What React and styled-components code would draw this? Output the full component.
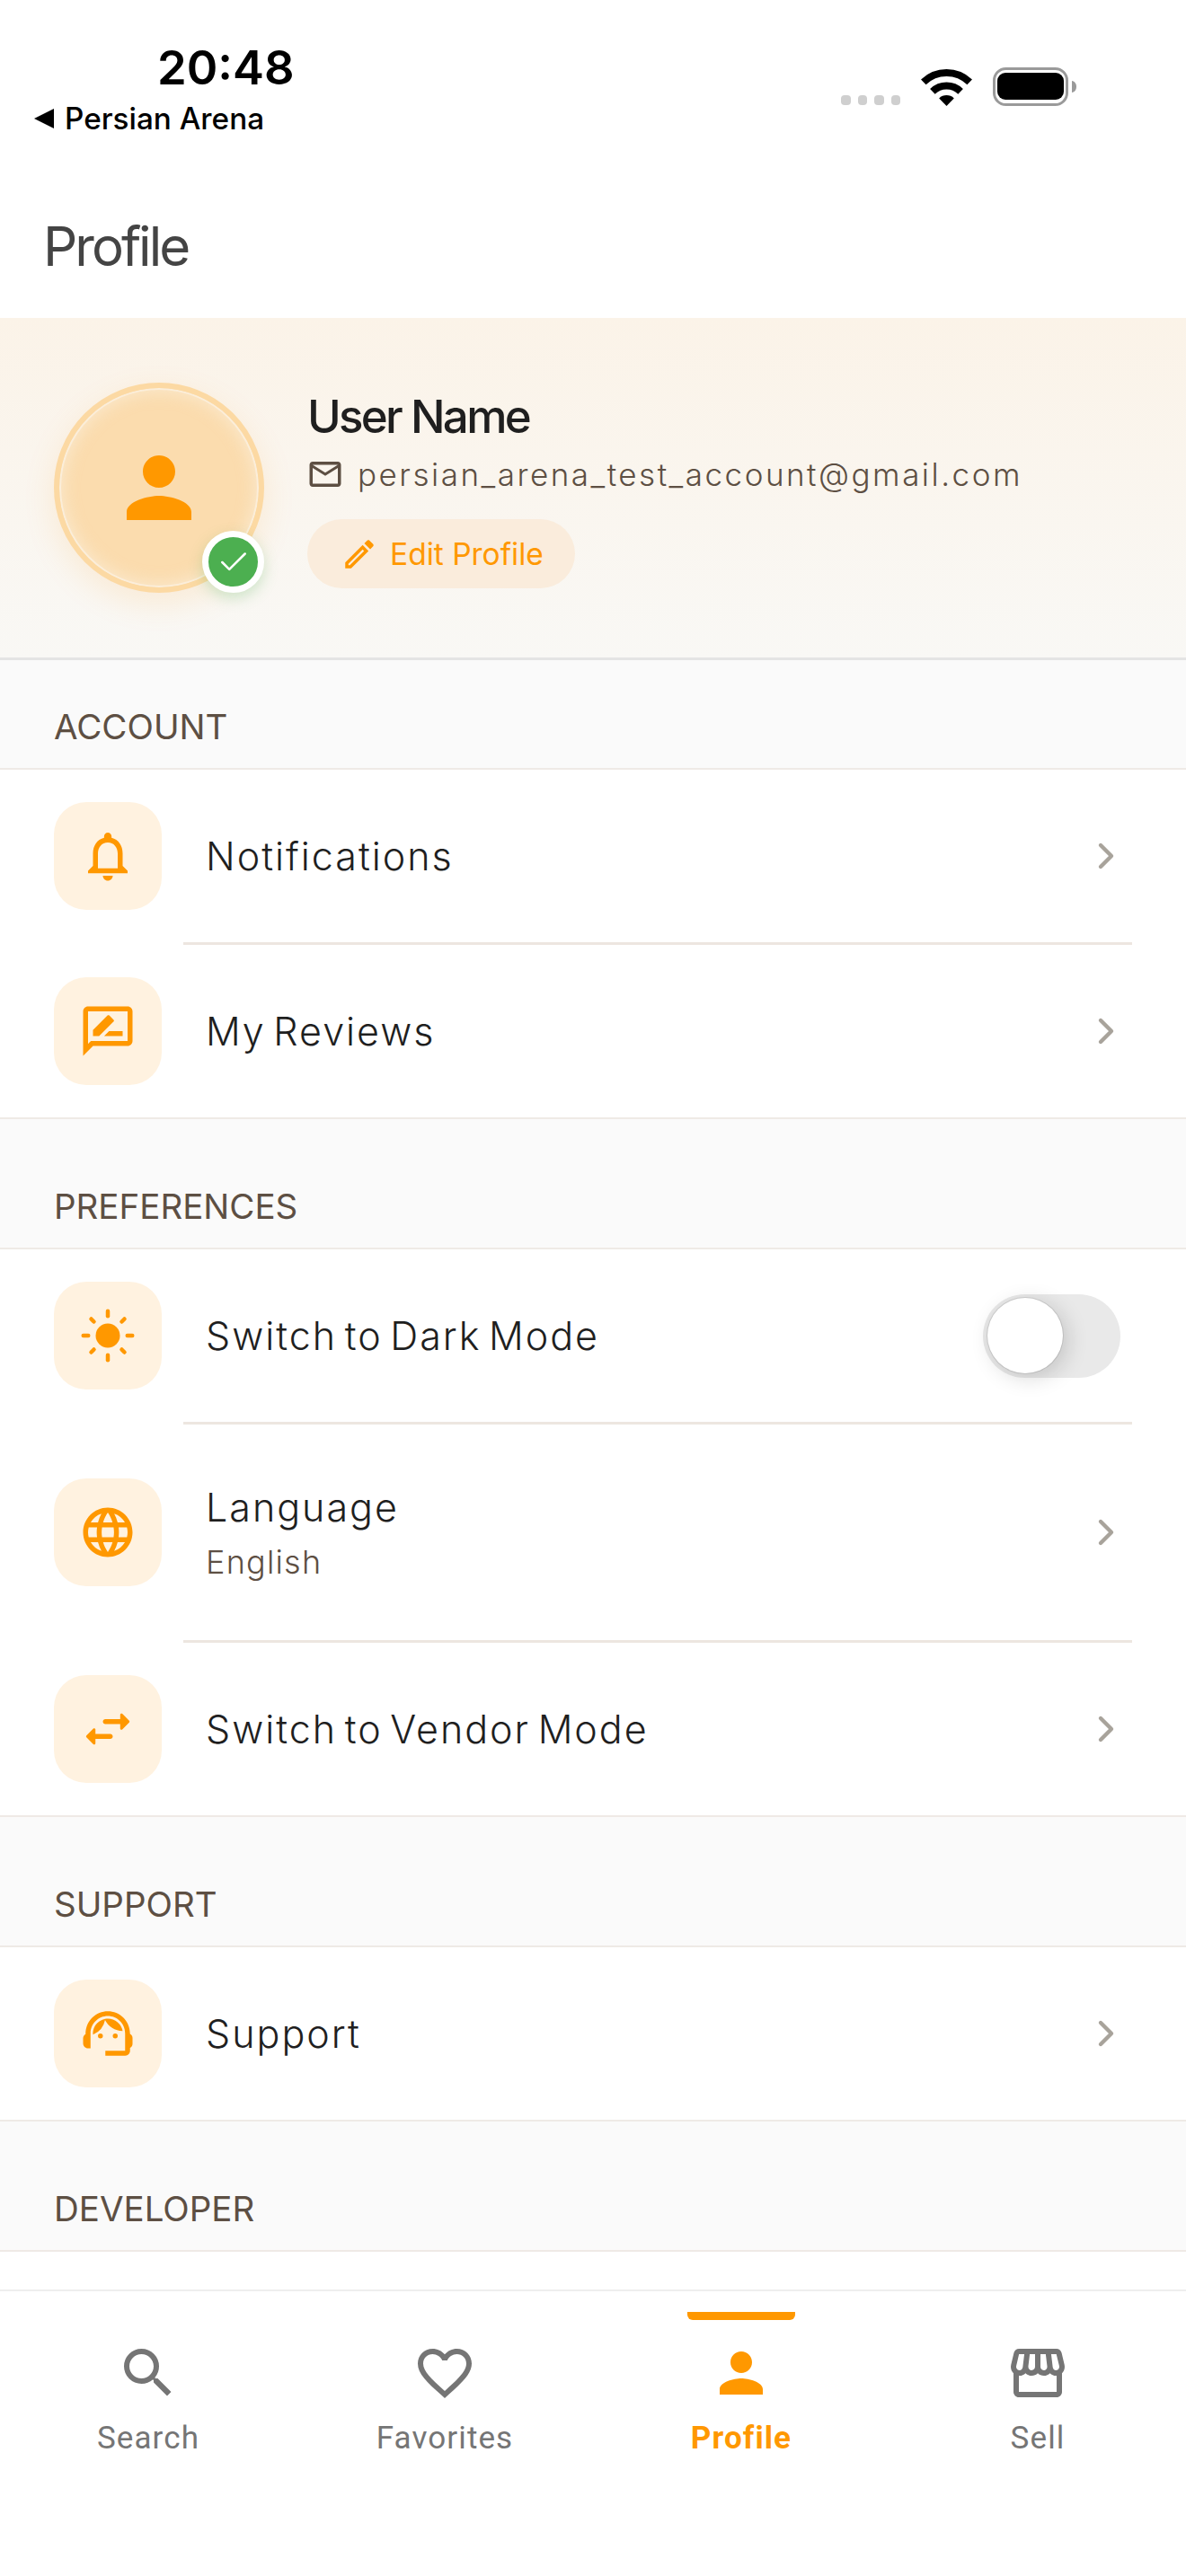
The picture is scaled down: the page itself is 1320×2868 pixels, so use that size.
import React from 'react'
import styled, { createGlobalStyle } from 'styled-components'
import { ChevronRight, Check } from 'lucide-react'
import {
  MdSearch,
  MdFavoriteBorder,
  MdPerson,
  MdOutlineStorefront,
  MdNotificationsNone,
  MdOutlineRateReview,
  MdLanguage,
  MdSupportAgent,
  MdMailOutline,
  MdOutlineEdit,
} from 'react-icons/md'

const ORANGE = '#ff9800'

const GlobalStyle = createGlobalStyle`
  html, body {
    margin: 0;
    padding: 0;
    background: #fff;
  }
  * {
    box-sizing: border-box;
  }
`

const Page = styled.div`
  width: 1320px;
  height: 2868px;
  display: flex;
  flex-direction: column;
  overflow: hidden;
  background: #fff;
  font-family: Inter, 'Liberation Sans', sans-serif;
`

const StatusBar = styled.div`
  height: 174px;
  flex: none;
  display: flex;
  justify-content: space-between;
  padding: 45px 122px 0 38px;
`

const StatusLeft = styled.div`
  display: flex;
  flex-direction: column;
`

const Time = styled.div`
  margin-left: 137px;
  font-size: 52.5px;
  line-height: 60px;
  font-weight: 600;
  color: #000;
`

const Carrier = styled.div`
  margin-top: 7px;
  display: flex;
  align-items: center;
  gap: 12px;
  font-size: 33.3px;
  line-height: 40px;
  font-weight: 500;
  color: #000;
`

const StatusRight = styled.div`
  margin-top: 30px;
  height: 43px;
  display: flex;
  align-items: flex-end;
  gap: 23px;
`

const Dots = styled.div`
  display: flex;
  gap: 8px;
  margin-bottom: 1px;
`

const Dot = styled.span`
  width: 10.5px;
  height: 11px;
  border-radius: 4px;
  background: #cfcfcf;
`

const Header = styled.div`
  height: 180px;
  flex: none;
  display: flex;
  align-items: center;
  padding: 20px 0 0 48px;
`

const Title = styled.h1`
  margin: 0;
  font-size: 60px;
  font-weight: 400;
  letter-spacing: -3px;
  color: #444;
`

const Content = styled.div`
  flex: 1;
  min-height: 0;
  overflow: hidden;
`

const Banner = styled.div`
  height: 381px;
  display: flex;
  align-items: flex-start;
  gap: 49px;
  padding: 72px 60px 0;
  background: linear-gradient(180deg, #fbf3e8 0%, #f9f8f5 100%);
  border-bottom: 3px solid #e4e4e4;
`

const Avatar = styled.div`
  position: relative;
  width: 234px;
  height: 234px;
  flex: none;
  display: flex;
  align-items: center;
  justify-content: center;
  border-radius: 50%;
  border: 6px solid #fcd9a3;
  background: #fbdcae;
  color: ${ORANGE};
  box-shadow: 0 12px 36px rgba(255, 152, 0, 0.12), inset 0 0 0 2px #fbeeda,
    inset 0 0 18px 4px rgba(251, 238, 218, 0.7);
`

const Badge = styled.div`
  position: absolute;
  right: -6px;
  bottom: -6px;
  width: 69px;
  height: 69px;
  display: flex;
  align-items: center;
  justify-content: center;
  border-radius: 50%;
  border: 7px solid #fff;
  background: #4caf50;
  color: #fff;
  box-shadow: 0 6px 16px rgba(76, 175, 80, 0.25);
`

const Info = styled.div`
  display: flex;
  flex-direction: column;
  align-items: flex-start;
  padding-top: 7px;
`

const Name = styled.div`
  margin-left: -1px;
  font-size: 51px;
  line-height: 62px;
  font-weight: 500;
  letter-spacing: -2.7px;
  color: #1f1f1f;
`

const EmailRow = styled.div`
  margin-top: 11px;
  display: flex;
  align-items: center;
  gap: 15px;
  font-size: 35px;
  line-height: 44px;
  font-weight: 300;
  letter-spacing: 2.5px;
  color: #5d4f43;
`

const EmailIcon = styled(MdMailOutline)`
  margin-left: -2px;
  flex: none;
`

const EditButton = styled.div`
  margin: 28px 0 0 -1px;
  height: 77px;
  width: 298px;
  display: flex;
  align-items: center;
  gap: 13px;
  padding-left: 37px;
  border-radius: 39px;
  background: #faecdc;
  color: ${ORANGE};
  font-size: 33.5px;
  font-weight: 400;
`

const SectionHeader = styled.div`
  height: ${(p) => (p.$first ? 122 : 145)}px;
  display: flex;
  align-items: flex-end;
  padding: 0 60px 22px;
  background: #fafafa;
  border-bottom: 2px solid #efeae6;
  color: #5d4f43;
  font-size: 38.5px;
  line-height: 48px;
  font-weight: 400;
  text-transform: uppercase;
`

const Group = styled.div`
  background: #fff;
  border-bottom: 2px solid #efeae6;
`

const Row = styled.div`
  display: flex;
  align-items: center;
  gap: 49px;
  padding: ${(p) => (p.$tall ? 60 : 36)}px 60px;
`

const RowIcon = styled.div`
  width: 120px;
  height: 120px;
  flex: none;
  display: flex;
  align-items: center;
  justify-content: center;
  border-radius: 36px;
  background: #fff2e0;
  color: ${ORANGE};
`

const RowText = styled.div`
  flex: 1;
  min-width: 0;
`

const RowTitle = styled.div`
  font-size: 43px;
  line-height: 54px;
  font-weight: 300;
  letter-spacing: 2px;
  word-spacing: -5.5px;
  color: #1f1f1f;
`

const RowSub = styled.div`
  margin-top: 11px;
  font-size: 36px;
  line-height: 46px;
  font-weight: 300;
  letter-spacing: 1.200px;
  color: #5d4f43;
`

const Chevron = styled(ChevronRight)`
  flex: none;
  margin-right: 5px;
  color: #a8a39b;
`

const Divider = styled.div`
  height: 3px;
  margin: 0 60px 0 204px;
  background: #ede6e0;
`

const Toggle = styled.div`
  position: relative;
  width: 153px;
  height: 93px;
  flex: none;
  margin-right: 13px;
  border-radius: 47px;
  background: #e9e9e9;
`

const ToggleKnob = styled.div`
  position: absolute;
  left: 5px;
  top: 4px;
  width: 84px;
  height: 84px;
  border-radius: 50%;
  background: #fff;
  box-shadow: 0 0 0 1px rgba(0, 0, 0, 0.1), 5px 5px 24px rgba(0, 0, 0, 0.16);
`

const TabBar = styled.div`
  height: 319px;
  flex: none;
  display: grid;
  grid-template-columns: repeat(4, 1fr);
  background: #fff;
  border-top: 2px solid #eeeeee;
`

const Tab = styled.div`
  display: flex;
  flex-direction: column;
  align-items: center;
  padding-top: 23px;
  color: ${(p) => (p.$active ? ORANGE : '#757575')};
`

const TabIndicator = styled.div`
  width: 120px;
  height: 9px;
  margin-bottom: 23px;
  border-radius: 0 0 6px 6px;
  background: ${(p) => (p.$active ? ORANGE : 'transparent')};
`

const TabLabel = styled.div`
  margin-top: 16px;
  font-family: Roboto, 'Liberation Sans', sans-serif;
  font-size: 35px;
  line-height: 42px;
  letter-spacing: 1.1px;
  font-weight: ${(p) => (p.$active ? 700 : 400)};
`

const WifiIcon = () => (
  <svg width="57" height="42" viewBox="0 0 57 42" fill="none">
    <path d="M2.8 15.4A37 37 0 0 1 54.2 15.4" stroke="#000" strokeWidth="8" />
    <path d="M12.9 25.8A22.5 22.5 0 0 1 44.1 25.8" stroke="#000" strokeWidth="8" />
    <path d="M28.5 42L20.2 33.4A12 12 0 0 1 36.8 33.4Z" fill="#000" />
  </svg>
)

const BatteryIcon = () => (
  <svg width="93" height="43" viewBox="0 0 93 43" fill="none">
    <rect x="1.5" y="1.5" width="81" height="40" rx="13" stroke="#9a9a9a" strokeWidth="3" />
    <rect x="5" y="6" width="74" height="30" rx="9" fill="#000" />
    <path d="M88 15c3 .5 5 3 5 6.500s-2 6-5 6.500z" fill="#9a9a9a" />
  </svg>
)

const SunIcon = () => (
  <svg width="66" height="66" viewBox="0 0 66 66" fill="currentColor">
    <circle cx="33" cy="33" r="13.500" />
    <g stroke="currentColor" strokeWidth="4.500" strokeLinecap="round">
      <path d="M33 5.750V11.250" />
      <path d="M33 54.750V60.250" />
      <path d="M5.750 33H11.250" />
      <path d="M54.750 33H60.250" />
      <path d="M14.500 14.500L17.500 17.500" />
      <path d="M48.500 48.500L51.500 51.500" />
      <path d="M14.500 51.500L17.500 48.500" />
      <path d="M48.500 17.500L51.500 14.500" />
    </g>
  </svg>
)

const SwapIcon = () => (
  <svg width="66" height="66" viewBox="0 0 24 24" fill="currentColor">
    <path d="M6.140 11.860l-2.780 2.790c-.190.200-.190.510 0 .710l2.780 2.790c.310.320.850.090.850-.350V16H13c.550 0 1-.450 1-1s-.450-1-1-1H6.990v-1.790c0-.450-.540-.670-.850-.350zm14.510-3.210l-2.780-2.790c-.310-.320-.850-.090-.850.350V8H11c-.550 0-1 .450-1 1s.450 1 1 1h6.010v1.790c0 .450.540.670.850.350l2.780-2.790c.200-.190.200-.510.010-.700z" />
  </svg>
)

const NavArrow = () => <Chevron size={48} strokeWidth={2.2} />

const tabs = [
  { label: 'Search', Icon: MdSearch },
  { label: 'Favorites', Icon: MdFavoriteBorder },
  { label: 'Profile', Icon: MdPerson, active: true },
  { label: 'Sell', Icon: MdOutlineStorefront },
]

const App = () => (
  <Page>
    <GlobalStyle />
    <StatusBar>
      <StatusLeft>
        <Time>20:48</Time>
        <Carrier>
          <svg width="22" height="22" viewBox="0 0 22 22">
            <path d="M0 11L22 0V22Z" fill="#000" />
          </svg>
          Persian Arena
        </Carrier>
      </StatusLeft>
      <StatusRight>
        <Dots>
          <Dot />
          <Dot />
          <Dot />
          <Dot />
        </Dots>
        <WifiIcon />
        <BatteryIcon />
      </StatusRight>
    </StatusBar>

    <Header>
      <Title>Profile</Title>
    </Header>

    <Content>
      <Banner>
        <Avatar>
          <MdPerson size={108} />
          <Badge>
            <Check size={38} strokeWidth={1.6} />
          </Badge>
        </Avatar>
        <Info>
          <Name>User Name</Name>
          <EmailRow>
            <EmailIcon size={42} />
            persian_arena_test_account@gmail.com
          </EmailRow>
          <EditButton>
            <MdOutlineEdit size={42} />
            Edit Profile
          </EditButton>
        </Info>
      </Banner>

      <SectionHeader $first>Account</SectionHeader>
      <Group>
        <Row>
          <RowIcon>
            <MdNotificationsNone size={66} />
          </RowIcon>
          <RowText>
            <RowTitle>Notifications</RowTitle>
          </RowText>
          <NavArrow />
        </Row>
        <Divider />
        <Row>
          <RowIcon>
            <MdOutlineRateReview size={66} />
          </RowIcon>
          <RowText>
            <RowTitle>My Reviews</RowTitle>
          </RowText>
          <NavArrow />
        </Row>
      </Group>

      <SectionHeader>Preferences</SectionHeader>
      <Group>
        <Row>
          <RowIcon>
            <SunIcon />
          </RowIcon>
          <RowText>
            <RowTitle>Switch to Dark Mode</RowTitle>
          </RowText>
          <Toggle>
            <ToggleKnob />
          </Toggle>
        </Row>
        <Divider />
        <Row $tall>
          <RowIcon>
            <MdLanguage size={66} />
          </RowIcon>
          <RowText>
            <RowTitle>Language</RowTitle>
            <RowSub>English</RowSub>
          </RowText>
          <NavArrow />
        </Row>
        <Divider />
        <Row>
          <RowIcon>
            <SwapIcon />
          </RowIcon>
          <RowText>
            <RowTitle>Switch to Vendor Mode</RowTitle>
          </RowText>
          <NavArrow />
        </Row>
      </Group>

      <SectionHeader>Support</SectionHeader>
      <Group>
        <Row>
          <RowIcon>
            <MdSupportAgent size={66} />
          </RowIcon>
          <RowText>
            <RowTitle>Support</RowTitle>
          </RowText>
          <NavArrow />
        </Row>
      </Group>

      <SectionHeader>Developer</SectionHeader>
    </Content>

    <TabBar>
      {tabs.map(({ label, Icon, active }) => (
        <Tab key={label} $active={active}>
          <TabIndicator $active={active} />
          <Icon size={72} />
          <TabLabel $active={active}>{label}</TabLabel>
        </Tab>
      ))}
    </TabBar>
  </Page>
)

export default App
